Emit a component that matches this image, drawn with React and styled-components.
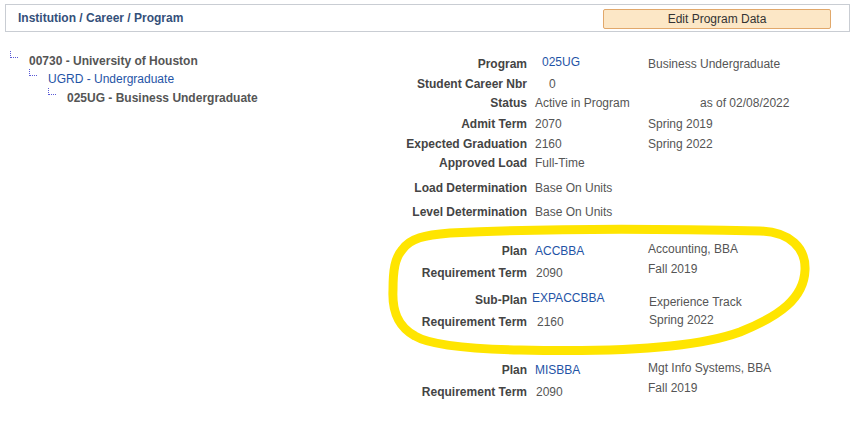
import React from 'react';
import styled, { createGlobalStyle } from 'styled-components';

const Global = createGlobalStyle`
  body {
    margin: 0;
    background: #fff;
    font-family: "Liberation Sans", Arial, sans-serif;
    font-size: 12px;
  }
`;

const Page = styled.div`
  position: relative;
  width: 864px;
  height: 421px;
  padding: 4px 0 0 5px;
  box-sizing: border-box;
`;

const Header = styled.div`
  display: flex;
  align-items: center;
  justify-content: space-between;
  width: 845px;
  height: 28px;
  box-sizing: border-box;
  border: 1px solid #c9cdd3;
  padding: 0 18px 0 12px;
`;

const Title = styled.div`
  font-weight: bold;
  color: #34507a;
`;

const Button = styled.button`
  width: 228px;
  height: 20px;
  margin-top: 1px;
  background: #fce7c6;
  border: 1px solid #e1a86b;
  border-radius: 2px;
  font-family: inherit;
  font-size: 12px;
  color: #333;
  padding: 0;
`;

const Body = styled.div`
  display: flex;
  margin-top: 20px;
`;

const Tree = styled.div`
  width: 375px;
  display: flex;
  flex-direction: column;
`;

const TreeRow = styled.div`
  display: flex;
  align-items: flex-start;
  height: ${p => p.h}px;
  line-height: 18px;
  padding-left: ${p => 5 + p.level * 19}px;
`;

const Connector = styled.span`
  width: 7px;
  height: 6px;
  margin-top: -1px;
  margin-right: 11px;
  border-left: 1px dotted #5b5bd6;
  border-bottom: 1px dotted #5b5bd6;
  flex-shrink: 0;
`;

const Node = styled.span`
  font-weight: ${p => (p.link ? 'normal' : 'bold')};
  color: ${p => (p.link ? '#1f54a6' : '#555')};
  white-space: nowrap;
`;

const Form = styled.div`
  display: flex;
  flex-direction: column;
  margin-top: 2px;
`;

const Row = styled.div`
  display: grid;
  grid-template-columns: 147px 121px 1fr;
  height: ${p => p.h}px;
  line-height: 20px;
  align-items: start;
`;

const Label = styled.div`
  text-align: right;
  font-weight: bold;
  color: #444;
  white-space: nowrap;
`;

const Value = styled.div`
  padding-left: ${p => p.indent}px;
  margin-top: ${p => p.dy || 0}px;
  color: ${p => (p.link ? '#1f54a6' : '#555')};
  white-space: nowrap;
`;

const Desc = styled.div`
  padding-left: ${p => p.indent || 0}px;
  margin-top: ${p => p.dy || 0}px;
  color: #555;
  white-space: nowrap;
`;

const Marker = styled.svg`
  position: absolute;
  left: 0;
  top: 0;
  pointer-events: none;
`;

const tree = [
  { level: 0, text: '00730 - University of Houston', h: 18 },
  { level: 1, text: 'UGRD - Undergraduate', link: true, h: 19 },
  { level: 2, text: '025UG - Business Undergraduate', h: 19 },
];

const rows = [
  { label: 'Program', h: 20, value: '025UG', link: true, indent: 15, vdy: -2, desc: 'Business Undergraduate' },
  { label: 'Student Career Nbr', h: 19, value: '0', indent: 22 },
  { label: 'Status', h: 21, value: 'Active in Program', indent: 8, desc: 'as of 02/08/2022', dIndent: 52 },
  { label: 'Admit Term', h: 20, value: '2070', indent: 8, desc: 'Spring 2019' },
  { label: 'Expected Graduation', h: 19, value: '2160', indent: 8, desc: 'Spring 2022' },
  { label: 'Approved Load', h: 25, value: 'Full-Time', indent: 8 },
  { label: 'Load Determination', h: 24, value: 'Base On Units', indent: 8 },
  { label: 'Level Determination', h: 39, value: 'Base On Units', indent: 8 },
  { label: 'Plan', h: 22, value: 'ACCBBA', link: true, indent: 8, desc: 'Accounting, BBA', ddy: -2 },
  { label: 'Requirement Term', h: 27, value: '2090', indent: 9, desc: 'Fall 2019', ddy: -4 },
  { label: 'Sub-Plan', h: 22, value: 'EXPACCBBA', link: true, indent: 5, vdy: -2, desc: 'Experience Track', dIndent: 1, ddy: 2 },
  { label: 'Requirement Term', h: 48, value: '2160', indent: 10, desc: 'Spring 2022', dIndent: 1, ddy: -2 },
  { label: 'Plan', h: 22, value: 'MISBBA', link: true, indent: 8, desc: 'Mgt Info Systems, BBA', ddy: -2 },
  { label: 'Requirement Term', h: 20, value: '2090', indent: 9, desc: 'Fall 2019', ddy: -4 },
];

const App = () => {
  return (
    <Page>
      <Global />
      <Header>
        <Title>Institution / Career / Program</Title>
        <Button>Edit Program Data</Button>
      </Header>
      <Body>
        <Tree>
          {tree.map((n, i) => (
            <TreeRow key={i} level={n.level} h={n.h}>
              <Connector />
              <Node link={n.link}>{n.text}</Node>
            </TreeRow>
          ))}
        </Tree>
        <Form>
          {rows.map((r, i) => (
            <Row key={i} h={r.h}>
              <Label>{r.label}</Label>
              <Value indent={r.indent} dy={r.vdy} link={r.link}>{r.value}</Value>
              {r.desc ? <Desc indent={r.dIndent} dy={r.ddy}>{r.desc}</Desc> : <div />}
            </Row>
          ))}
        </Form>
      </Body>
      {/* highlighter circle drawn over the first plan block */}
      <Marker width="864" height="421" viewBox="0 0 864 421">
        <path
          d="M 402 250 C 410 238, 425 235, 450 233 C 550 228, 680 229, 760 231 C 790 232, 806 248, 805 270 C 804 298, 780 316, 740 332 C 690 350, 600 352, 520 350 C 470 349, 430 345, 415 336 C 397 326, 392 310, 393 290 C 393 270, 395 258, 402 250 Z"
          fill="none"
          stroke="#ffe500"
          strokeWidth="9"
          strokeLinejoin="round"
        />
      </Marker>
    </Page>
  );
};

export default App;
